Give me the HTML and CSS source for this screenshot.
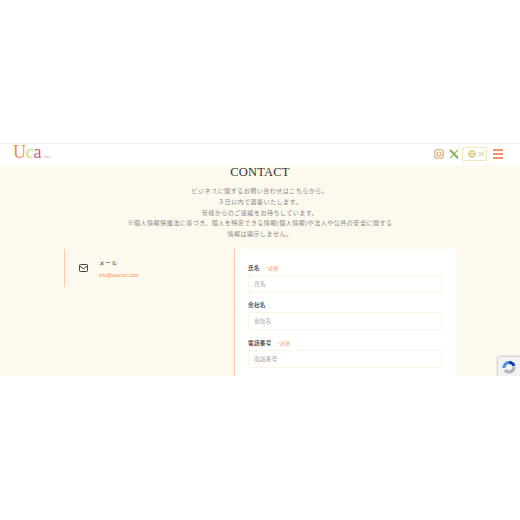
FILE: index.html
```html
<!DOCTYPE html>
<html lang="ja">
<head>
    <meta charset="UTF-8">
    <meta name="viewport" content="width=device-width, initial-scale=1.0">
    <title>Contact</title>
    <link rel="stylesheet" href="styles.css">
</head>
<body>
<div class="frame">
    <header class="site-header">
        <a class="logo" href="#"><span class="logo-u">U</span><span class="logo-c">c</span><span class="logo-a">a</span><span class="logo-inc">.inc</span></a>
        <div class="header-tools">
            <a href="#" class="tool-icon" aria-label="Instagram">
                <svg width="10" height="10" viewBox="0 0 10 10" fill="none" stroke="#dda66e" stroke-width="1.1">
                    <rect x="0.8" y="0.8" width="8.4" height="8.4" rx="2.2"/>
                    <circle cx="5" cy="5" r="2"/>
                </svg>
            </a>
            <a href="#" class="tool-icon" aria-label="X">
                <svg width="10" height="10" viewBox="0 0 10 10" fill="none" stroke="#8fb56a">
                    <path d="M1 1 L9 9.2" stroke-width="2.4"/>
                    <path d="M9 0.8 L1 9.2" stroke-width="1.2"/>
                </svg>
            </a>
            <button class="lang-btn">
                <svg width="8" height="8" viewBox="0 0 8 8" fill="none" stroke="#cfc062" stroke-width="0.8">
                    <circle cx="4" cy="4" r="3.5"/>
                    <ellipse cx="4" cy="4" rx="1.5" ry="3.5"/>
                    <path d="M0.5 4 H7.5"/>
                </svg>
                <span>JA</span>
            </button>
            <a href="#" class="menu-btn" aria-label="Menu"><span></span><span></span><span></span></a>
        </div>
    </header>

    <main class="contact">
        <h1>CONTACT</h1>
        <p class="lead">ビジネスに関するお問い合わせはこちらから。<br>３日以内で返答いたします。<br>皆様からのご連絡をお待ちしています。<br>※個人情報保護法に基づき、個人を特定できる情報(個人情報)や法人や公共の安全に関する<br>情報は開示しません。</p>

        <div class="contact-grid">
            <aside class="mail-box">
                <svg class="mail-icon" width="9" height="8" viewBox="0 0 9 8" fill="none" stroke="#444" stroke-width="1">
                    <rect x="0.5" y="0.5" width="8" height="7" rx="0.8"/>
                    <path d="M1 2.2 L4.5 4.8 L8 2.2"/>
                </svg>
                <div class="mail-text">
                    <div class="mail-title">メール</div>
                    <a href="#" class="mail-link">info@uca-inc.com</a>
                </div>
            </aside>

            <form class="contact-form">
                <div class="field">
                    <label>氏名<span class="req">*必須</span></label>
                    <input type="text" placeholder="氏名">
                </div>
                <div class="field">
                    <label>会社名</label>
                    <input type="text" placeholder="会社名">
                </div>
                <div class="field">
                    <label>電話番号<span class="req">*必須</span></label>
                    <input type="text" placeholder="電話番号">
                </div>
            </form>
        </div>
    </main>

    <div class="recaptcha">
        <svg width="16" height="14" viewBox="0 0 16 14" fill="none" stroke-width="3">
            <path d="M3 8 A5 5 0 0 1 8 2.5" stroke="#4a90e2"/>
            <path d="M8 2.5 A5 5 0 0 1 13 6" stroke="#1c3aa9"/>
            <path d="M13 7 A5 5 0 0 1 4 10" stroke="#b3b3b3"/>
        </svg>
    </div>
</div>
</body>
</html>
```

FILE: styles.css
```css
html, body {
    margin: 0;
    padding: 0;
    background: #ffffff;
}

body {
    padding-top: 143px;
    font-family: "Liberation Serif", "Noto Sans CJK JP", serif;
    color: #333;
}

a {
    text-decoration: none;
}

.frame {
    position: relative;
    height: 233px;
    overflow: hidden;
    background: #fef9ee;
}

.site-header {
    box-sizing: content-box;
    height: 20px;
    display: flex;
    justify-content: space-between;
    align-items: center;
    background: #fff;
    border-top: 1px solid #f0f0f0;
    padding: 0 17px 1px 13px;
}

.logo {
    font-size: 18px;
    line-height: 20px;
    letter-spacing: -0.2px;
}

.logo-u { color: #f4854a; }
.logo-c { color: #d5de6e; }
.logo-a { color: #cc5a90; }
.logo-inc { color: #d9a080; font-size: 5px; letter-spacing: 0.4px; margin-left: 1px; }

.header-tools {
    display: flex;
    align-items: center;
}

.tool-icon {
    display: flex;
    margin-right: 5px;
}

.lang-btn {
    display: flex;
    align-items: center;
    gap: 2px;
    box-sizing: border-box;
    width: 25px;
    height: 14px;
    padding: 0 0 0 5px;
    margin: 0 6px 0 -2px;
    background: #fff;
    border: 1px solid #eee9b8;
    border-radius: 1px;
    font-family: "Liberation Sans", sans-serif;
    font-size: 5px;
    color: #cfc062;
}

.menu-btn {
    display: flex;
    flex-direction: column;
    gap: 2px;
    width: 10px;
}

.menu-btn span {
    height: 2px;
    background: #f2936a;
}

.contact {
    text-align: center;
}

.contact h1 {
    margin: 0;
    font-size: 12.5px;
    line-height: 15px;
    font-weight: 400;
    letter-spacing: 0.2px;
    color: #333;
}

.lead {
    margin: 6px 0 0;
    font-size: 6.1px;
    line-height: 10.75px;
    letter-spacing: 0.42px;
    color: #888;
}

.contact-grid {
    display: flex;
    align-items: flex-start;
    margin: 9px 64px 0;
    text-align: left;
}

.mail-box {
    box-sizing: border-box;
    width: 170px;
    height: 38px;
    display: flex;
    border-left: 1px solid #ffc9ae;
    padding: 11px 0 0 14px;
}

.mail-icon {
    margin-top: 4px;
}

.mail-text {
    margin-left: 11px;
}

.mail-title {
    font-size: 5.6px;
    line-height: 6px;
    letter-spacing: 0.5px;
    color: #333;
}

.mail-link {
    display: block;
    margin-top: 7px;
    font-family: "Liberation Sans", sans-serif;
    font-size: 4.9px;
    line-height: 6px;
    color: #f58f50;
}

.contact-form {
    box-sizing: border-box;
    width: 222px;
    min-height: 140px;
    background: #fff;
    border-left: 1px solid #ffc9ae;
    padding: 16px 14px 0 13px;
}

.field {
    margin-bottom: 9.5px;
}

.field label {
    display: block;
    height: 10px;
    font-size: 5.6px;
    font-weight: 700;
    line-height: 6px;
    letter-spacing: 0.3px;
    color: #555;
}

.req {
    margin-left: 6px;
    font-size: 4.6px;
    font-weight: 400;
    color: #f58f50;
}

.field input {
    display: block;
    box-sizing: border-box;
    width: 100%;
    height: 18px;
    padding: 0 5px;
    background: #fff;
    border: 1px solid #f8f7e4;
    font-family: "Liberation Serif", "Noto Sans CJK JP", serif;
    font-size: 5.8px;
    outline: none;
}

.field input::placeholder {
    color: #aaa;
}

.recaptcha {
    position: absolute;
    top: 214px;
    left: 498px;
    width: 30px;
    height: 24px;
    padding: 3px 0 0 3px;
    box-sizing: border-box;
    background: #f2f2f2;
    border-radius: 2px 0 0 0;
    box-shadow: 0 0 3px #999;
}
```
